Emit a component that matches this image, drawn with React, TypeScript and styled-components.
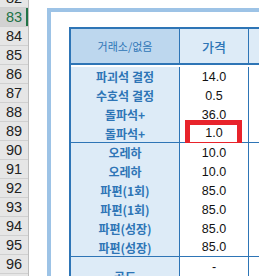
import React from 'react';
import styled, { createGlobalStyle } from 'styled-components';

const GlobalStyle = createGlobalStyle`
  html, body {
    margin: 0;
    padding: 0;
    background: #ffffff;
    overflow: hidden;
  }
`;

const BLUE = '#2e75b6';

const Page = styled.div`
  display: flex;
  width: 259px;
  height: 276px;
  overflow: hidden;
  background: #ffffff;
`;

const RowHeaders = styled.div`
  display: flex;
  flex-direction: column;
  flex: 0 0 28px;
  margin-top: -11px;
  background: #e6e6e6;
  border-right: 1px solid #bdbdbd;
`;

const RowHead = styled.div<{ $selected?: boolean }>`
  box-sizing: border-box;
  height: 19px;
  flex: 0 0 19px;
  display: flex;
  align-items: center;
  justify-content: center;
  border-bottom: 1px solid #d0d0d0;
  font-family: 'Liberation Sans', Arial, sans-serif;
  font-size: 14.5px;
  color: ${(p) => (p.$selected ? '#217346' : '#222222')};
  background: ${(p) => (p.$selected ? '#d2d2d2' : 'transparent')};
  box-shadow: ${(p) => (p.$selected ? 'inset -2px 0 0 #217346' : 'none')};
`;

const Sheet = styled.div`
  flex: 1;
  padding: 8px 0 0 18px;
`;

const Frame = styled.div`
  border-left: 4px solid #9dc3e6;
  border-top: 4px solid #9dc3e6;
  padding: 15px 0 0 18px;
  height: 100%;
  background: #ffffff;
`;

const Table = styled.div`
  display: grid;
  grid-template-columns: 109px 69px 1fr;
  grid-auto-rows: 19px;
  border-left: 2px solid ${BLUE};
  border-top: 2px solid ${BLUE};
`;

const Cell = styled.div<{ $bg?: string; $divider?: string; $right?: boolean; $span?: number }>`
  position: relative;
  box-sizing: border-box;
  display: flex;
  align-items: center;
  justify-content: center;
  white-space: nowrap;
  background: ${(p) => p.$bg || '#ffffff'};
  border-right: ${(p) => (p.$right ? `1px solid ${BLUE}` : 'none')};
  border-bottom: ${(p) => p.$divider || 'none'};
  grid-row: ${(p) => (p.$span ? `span ${p.$span}` : 'auto')};
`;

const HeadCell = styled(Cell)`
  grid-row: span 2;
  height: 36px;
  border-bottom: 2px solid ${BLUE};
`;

const HeadLabel = styled.span<{ $big?: boolean }>`
  font-family: 'Noto Sans CJK KR', 'Noto Sans', sans-serif;
  font-size: ${(p) => (p.$big ? '13px' : '11px')};
  font-weight: ${(p) => (p.$big ? 500 : 400)};
  color: ${BLUE};
`;

const ItemName = styled.span`
  font-family: 'Noto Sans CJK KR', 'Noto Sans', sans-serif;
  font-size: 12px;
  font-weight: 700;
  color: ${BLUE};
`;

const Price = styled.span`
  font-family: 'Liberation Sans', Arial, sans-serif;
  font-size: 12.5px;
  color: #111111;
`;

const TopPrice = styled(Cell)`
  align-items: flex-start;
  padding-top: 3px;
`;

const Highlight = styled.div`
  position: absolute;
  left: 5px;
  top: -4px;
  width: 57px;
  height: 27px;
  box-sizing: border-box;
  border: 5px solid #e8232b;
  pointer-events: none;
`;

type Row = { name: string; price: string; mark?: boolean };

const groups: Row[][] = [
  [
    { name: '파괴석 결정', price: '14.0' },
    { name: '수호석 결정', price: '0.5' },
    { name: '돌파석+', price: '36.0' },
    { name: '돌파석+', price: '1.0', mark: true },
  ],
  [
    { name: '오레하', price: '10.0' },
    { name: '오레하', price: '10.0' },
    { name: '파편(1회)', price: '85.0' },
    { name: '파편(1회)', price: '85.0' },
    { name: '파편(성장)', price: '85.0' },
    { name: '파편(성장)', price: '85.0' },
  ],
];

const rowNumbers = Array.from({ length: 15 }, (_, i) => 82 + i);

export default function App() {
  const line = `1px solid ${BLUE}`;
  return (
    <>
      <GlobalStyle />
      <Page>
        <RowHeaders>
          {rowNumbers.map((n) => (
            <RowHead key={n} $selected={n === 83}>
              {n}
            </RowHead>
          ))}
        </RowHeaders>
        <Sheet>
          <Frame>
            <Table>
              <HeadCell $bg="#bdd7ee" $right>
                <HeadLabel>거래소/없음</HeadLabel>
              </HeadCell>
              <HeadCell $bg="#ddebf7" $right>
                <HeadLabel $big>가격</HeadLabel>
              </HeadCell>
              <HeadCell $bg="#ddebf7" />

              {groups.map((group, gi) =>
                group.map((row, ri) => {
                  const divider = ri === group.length - 1 ? line : undefined;
                  return (
                    <React.Fragment key={`${gi}-${ri}`}>
                      <Cell $bg="#ddebf7" $right $divider={divider}>
                        <ItemName>{row.name}</ItemName>
                      </Cell>
                      <Cell $right $divider={divider}>
                        <Price>{row.price}</Price>
                        {row.mark && <Highlight />}
                      </Cell>
                      <Cell $divider={divider} />
                    </React.Fragment>
                  );
                })
              )}

              <Cell $bg="#ddebf7" $right $span={2}>
                <ItemName>골드</ItemName>
              </Cell>
              <TopPrice $right $span={2}>
                <Price>-</Price>
              </TopPrice>
              <Cell $span={2} />
            </Table>
          </Frame>
        </Sheet>
      </Page>
    </>
  );
}
